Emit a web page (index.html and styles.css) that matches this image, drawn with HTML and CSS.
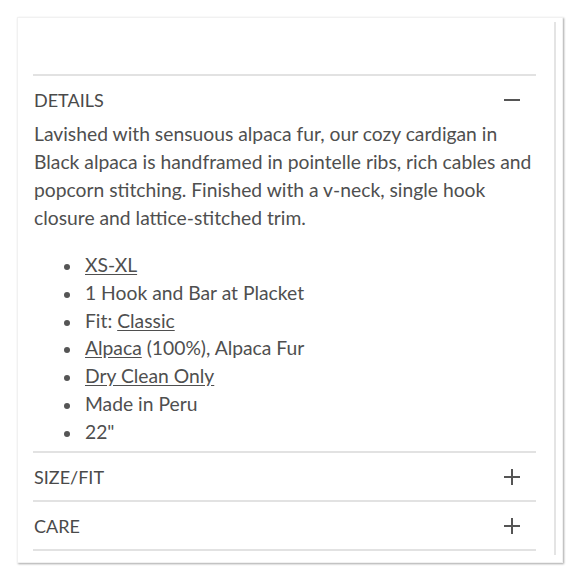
FILE: index.html
```html
<!DOCTYPE html>
<html lang="en">
<head>
<meta charset="utf-8">
<title>Product details</title>
<link rel="stylesheet" href="styles.css">
</head>
<body>
<div class="card">
  <div class="panel">
    <section class="acc open">
      <div class="head">
        <span class="title">DETAILS</span>
        <svg class="icon" width="16" height="16" viewBox="0 0 16 16"><path d="M0 8H16" stroke="#555" stroke-width="2"/></svg>
      </div>
      <div class="body">
        <p class="desc">Lavished with sensuous alpaca fur, our cozy cardigan in<br>Black alpaca is handframed in pointelle ribs, rich cables and<br>popcorn stitching. Finished with a v-neck, single hook<br>closure and lattice-stitched trim.</p>
        <ul class="list">
          <li><a href="#">XS-XL</a></li>
          <li>1 Hook and Bar at Placket</li>
          <li>Fit: <a href="#">Classic</a></li>
          <li><a href="#">Alpaca</a> (100%), Alpaca Fur</li>
          <li><a href="#">Dry Clean Only</a></li>
          <li>Made in Peru</li>
          <li>22"</li>
          <li>This product is shown with the belt and it is sold separately</li>
        </ul>
      </div>
    </section>
    <section class="acc">
      <div class="head">
        <span class="title">SIZE/FIT</span>
        <svg class="icon" width="16" height="16" viewBox="0 0 16 16"><path d="M0 8H16M8 0V16" stroke="#555" stroke-width="2"/></svg>
      </div>
    </section>
    <section class="acc last">
      <div class="head">
        <span class="title">CARE</span>
        <svg class="icon" width="16" height="16" viewBox="0 0 16 16"><path d="M0 8H16M8 0V16" stroke="#555" stroke-width="2"/></svg>
      </div>
    </section>
  </div>
</div>
</body>
</html>
```
FILE: styles.css
```css
* { box-sizing: border-box; }
html, body { margin: 0; padding: 0; background: #fff; }
body {
  font-family: Lato, "Open Sans", sans-serif;
  color: #4f4f4f;
}
.card {
  margin: 17px;
  width: 546px;
  height: 546px;
  border: 1px solid #f1f1f1;
  box-shadow: 1px 1px 2px rgba(0,0,0,0.35);
  padding: 4px 6px 7px 0;
}
.panel {
  height: 100%;
  border-right: 2px solid #e4e4e4;
  padding: 52px 18px 0 15px;
}
.acc { border-top: 2px solid #e2e2e2; }
.acc.last { border-bottom: 2px solid #e2e2e2; }
.head {
  display: flex;
  justify-content: space-between;
  align-items: center;
  padding: 14px 16px 13px 1px;
  line-height: 20px;
}
.acc.open .head { padding-bottom: 10px; padding-top: 14px; }
.title {
  font-size: 18px;
  color: #4a4a4a;
}
.icon { display: block; }
.body {
  height: 331px;
  overflow: hidden;
  font-size: 19.3px;
  padding-left: 1px;
}
.desc {
  margin: 0 0 19px;
  line-height: 28px;
  white-space: nowrap;
}
.list {
  list-style: none;
  margin: 0;
  padding: 0 0 0 51px;
  line-height: 27.75px;
}
.list li { white-space: nowrap; }
.list li::before {
  content: "";
  display: inline-block;
  width: 6px;
  height: 6px;
  border-radius: 50%;
  background: #555;
  margin-left: -21px;
  margin-right: 15px;
  vertical-align: middle;
}
.list a { color: inherit; text-decoration: underline; text-underline-offset: 2px; }
```
